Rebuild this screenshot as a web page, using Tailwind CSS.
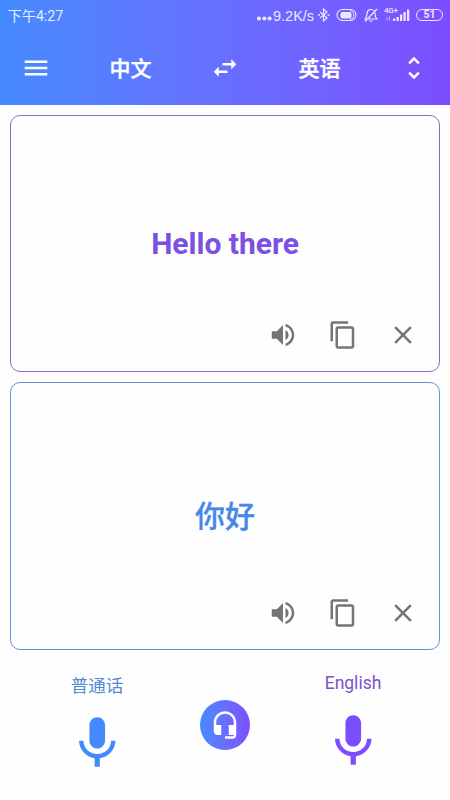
<!DOCTYPE html>
<html lang="zh-CN">
<head>
<meta charset="utf-8">
<title>翻译</title>
<script src="https://cdn.jsdelivr.net/npm/@tailwindcss/browser@4"></script>
</head>
<body class="w-[450px] h-[800px] overflow-hidden bg-[#fefefe] flex flex-col font-[Roboto,'Noto_Sans_CJK_SC',sans-serif]">
<svg class="hidden">
  <symbol id="sound" viewBox="0 0 24 24"><path d="M3 9v6h4l5 5V4L7 9H3zm13.500 3c0-1.770-1.020-3.290-2.500-4.030v8.050c1.480-.73 2.500-2.250 2.500-4.020zM14 3.230v2.060c2.890.86 5 3.540 5 6.710s-2.110 5.850-5 6.710v2.060c4.010-.91 7-4.490 7-8.770s-2.990-7.860-7-8.770z"/></symbol>
  <symbol id="copy" viewBox="0 0 24 24"><path d="M16 1H4c-1.100 0-2 .9-2 2v14h2V3h12V1zm3 4H8c-1.100 0-2 .9-2 2v14c0 1.100.9 2 2 2h11c1.100 0 2-.9 2-2V7c0-1.100-.9-2-2-2zm0 16H8V7h11v14z"/></symbol>
  <symbol id="close" viewBox="0 0 24 24"><path d="M19 6.410L17.590 5 12 10.590 6.410 5 5 6.410 10.590 12 5 17.590 6.410 19 12 13.410 17.590 19 19 17.590 13.410 12z"/></symbol>
  <symbol id="mic" viewBox="0 0 24 24"><path d="M12 14c1.660 0 3-1.340 3-3V5c0-1.660-1.340-3-3-3S9 3.340 9 5v6c0 1.660 1.340 3 3 3zm5.300-3c0 3-2.540 5.100-5.300 5.100S6.700 14 6.700 11H5c0 3.410 2.720 6.230 6 6.720V21h2v-3.280c3.280-.48 6-3.300 6-6.720h-1.700z"/></symbol>
</svg>

<header class="h-[105px] shrink-0 bg-linear-to-r from-[#448aff] to-[#7c4dff] text-white">
  <div class="h-[30px] pl-[7.500px] pr-[7px] flex items-center justify-between text-white/85">
    <span class="text-[14.200px] leading-[30px] pt-px">下午4:27</span>
    <div class="flex items-center">
      <svg class="w-[15px] h-[5px] mt-[7px]" viewBox="0 0 15 5" fill="currentColor"><circle cx="2" cy="2.500" r="2.100"/><circle cx="7.300" cy="2.500" r="2.100"/><circle cx="12.600" cy="2.500" r="2.100"/></svg>
      <span class="w-[42px] ml-px text-[14.500px] leading-[30px] pt-px font-['Liberation_Sans',sans-serif] whitespace-nowrap">9.2K/s</span>
      <svg class="w-[13px] h-[14px] ml-[2px]" viewBox="0 0 13 14" fill="none" stroke="currentColor" stroke-width="1.200"><path d="M3 4l7 6-3.500 3V1L10 4 3 10"/><path d="M1 7h2M10.500 7h2" stroke-width="1.700"/></svg>
      <svg class="w-[21px] h-[14px] ml-[6px]" viewBox="0 0 21 14" fill="none" stroke="currentColor"><rect x="1" y="1.500" width="19" height="11" rx="5.500" stroke-width="1.100"/><rect x="4.500" y="4" width="11" height="6.500" rx="2" fill="currentColor" stroke="none"/><path d="M14 2.500c5 1 5 8 0 9"/></svg>
      <svg class="w-[14px] h-[14px] ml-[7px]" viewBox="0 0 14 14" fill="none" stroke="currentColor" stroke-width="1.200"><path d="M1 11h12c-1.500-1.500-2-2.500-2-5 0-2.500-1.500-4.500-4-4.500S3 3.500 3 6c0 2.500-.5 3.500-2 5zM5.500 12.500c.8 1 2.200 1 3 0M13 1L1 13.500"/></svg>
      <div class="relative w-[26px] h-[14px] ml-[6px]">
        <span class="absolute left-0 -top-px text-[8px] leading-[8px] tracking-[-0.200px] font-medium font-[Roboto,sans-serif]">4G+</span>
        <svg class="w-[26px] h-[14px]" viewBox="0 0 26 14" fill="currentColor"><path d="M9 10.500h2.300V13H9zM12.500 9h2.300v4h-2.300zM16 6.500h2.300V13H16zM19.500 4h2.300v9h-2.300zM23 1.500h2.300V13H23z"/><path d="M2.500 9h1v4h-1zM5 8.500h1v4H5z" opacity=".6"/></svg>
      </div>
      <span class="w-[27px] h-[12px] ml-[6px] rounded-full border border-current flex items-center justify-center text-[10.500px] leading-none font-bold">51</span>
    </div>
  </div>
  <div class="h-[75px] px-[21px] flex items-center justify-between">
    <svg class="w-[30px] h-[30px]" viewBox="0 0 24 24" fill="currentColor"><path d="M3 18h18v-2H3v2zm0-5h18v-2H3v2zm0-7v2h18V6H3z"/></svg>
    <div class="flex items-center">
      <span class="text-[21px] leading-[30px] pt-[2px] font-medium [-webkit-text-stroke:0.400px_white]">中文</span>
      <svg class="w-[30px] h-[30px] mx-[58.500px]" viewBox="0 0 24 24" fill="currentColor"><path d="M6.990 11L3 15l3.990 4v-3H14v-2H6.990v-3zM21 9l-3.990-4v3H10v2h7.010v3L21 9z"/></svg>
      <span class="text-[21px] leading-[30px] pt-[2px] font-medium [-webkit-text-stroke:0.400px_white]">英语</span>
    </div>
    <svg class="w-[30px] h-[30px]" viewBox="0 0 24 24" fill="currentColor"><path d="M12 5.830L15.170 9l1.410-1.410L12 3 7.410 7.590 8.830 9 12 5.830zm0 12.340L8.830 15l-1.410 1.410L12 21l4.590-4.590L15.170 15 12 18.170z"/></svg>
  </div>
</header>

<main class="px-[10px] pt-[10px] flex flex-col gap-[10px]">
  <section class="h-[257px] rounded-[10px] border border-[#9368c0] flex flex-col">
    <div class="grow flex items-center justify-center pt-[51px]"><p class="text-[30px] leading-[36px] font-bold text-[#7b50e2]">Hello there</p></div>
    <div class="flex justify-end gap-[30px] pr-[21px] pb-[21px] text-[#757575] fill-current">
      <svg class="w-[30px] h-[30px]"><use href="#sound"/></svg>
      <svg class="w-[30px] h-[30px]"><use href="#copy"/></svg>
      <svg class="w-[30px] h-[30px]"><use href="#close"/></svg>
    </div>
  </section>
  <section class="h-[268px] rounded-[10px] border border-[#6096d6] flex flex-col">
    <div class="grow flex items-center justify-center pt-[53px]"><p class="text-[30px] leading-[36px] font-medium text-[#4588ea] [-webkit-text-stroke:0.300px_#4588ea]">你好</p></div>
    <div class="flex justify-end gap-[30px] pr-[21px] pb-[21px] text-[#757575] fill-current">
      <svg class="w-[30px] h-[30px]"><use href="#sound"/></svg>
      <svg class="w-[30px] h-[30px]"><use href="#copy"/></svg>
      <svg class="w-[30px] h-[30px]"><use href="#close"/></svg>
    </div>
  </section>
</main>

<footer class="grow flex items-start justify-between px-[47px] pt-[20px]">
  <div class="w-[100px] flex flex-col items-center pt-[2px]">
    <span class="text-[17.500px] leading-[26px] pt-px text-[#5289d2]">普通话</span>
    <svg class="w-[62.500px] h-[62.500px] mt-[13px] fill-[#448aff]"><use href="#mic"/></svg>
  </div>
  <button class="w-[50px] h-[50px] mt-[30px] rounded-full bg-linear-to-r from-[#448aff] to-[#7c4dff] flex items-center justify-center">
    <svg class="w-[30px] h-[30px] fill-white" viewBox="0 0 24 24"><path d="M12 1c-4.970 0-9 4.030-9 9v7c0 1.660 1.340 3 3 3h3v-8H5v-2c0-3.870 3.130-7 7-7s7 3.130 7 7v2h-4v8h4v1h-7v2h6c1.660 0 3-1.340 3-3V10c0-4.970-4.030-9-9-9z"/></svg>
  </button>
  <div class="w-[100px] flex flex-col items-center">
    <span class="text-[17.500px] leading-[26px] text-[#7b53c8]">English</span>
    <svg class="w-[62.500px] h-[62.500px] mt-[14px] fill-[#7c4dff]"><use href="#mic"/></svg>
  </div>
</footer>
</body>
</html>
